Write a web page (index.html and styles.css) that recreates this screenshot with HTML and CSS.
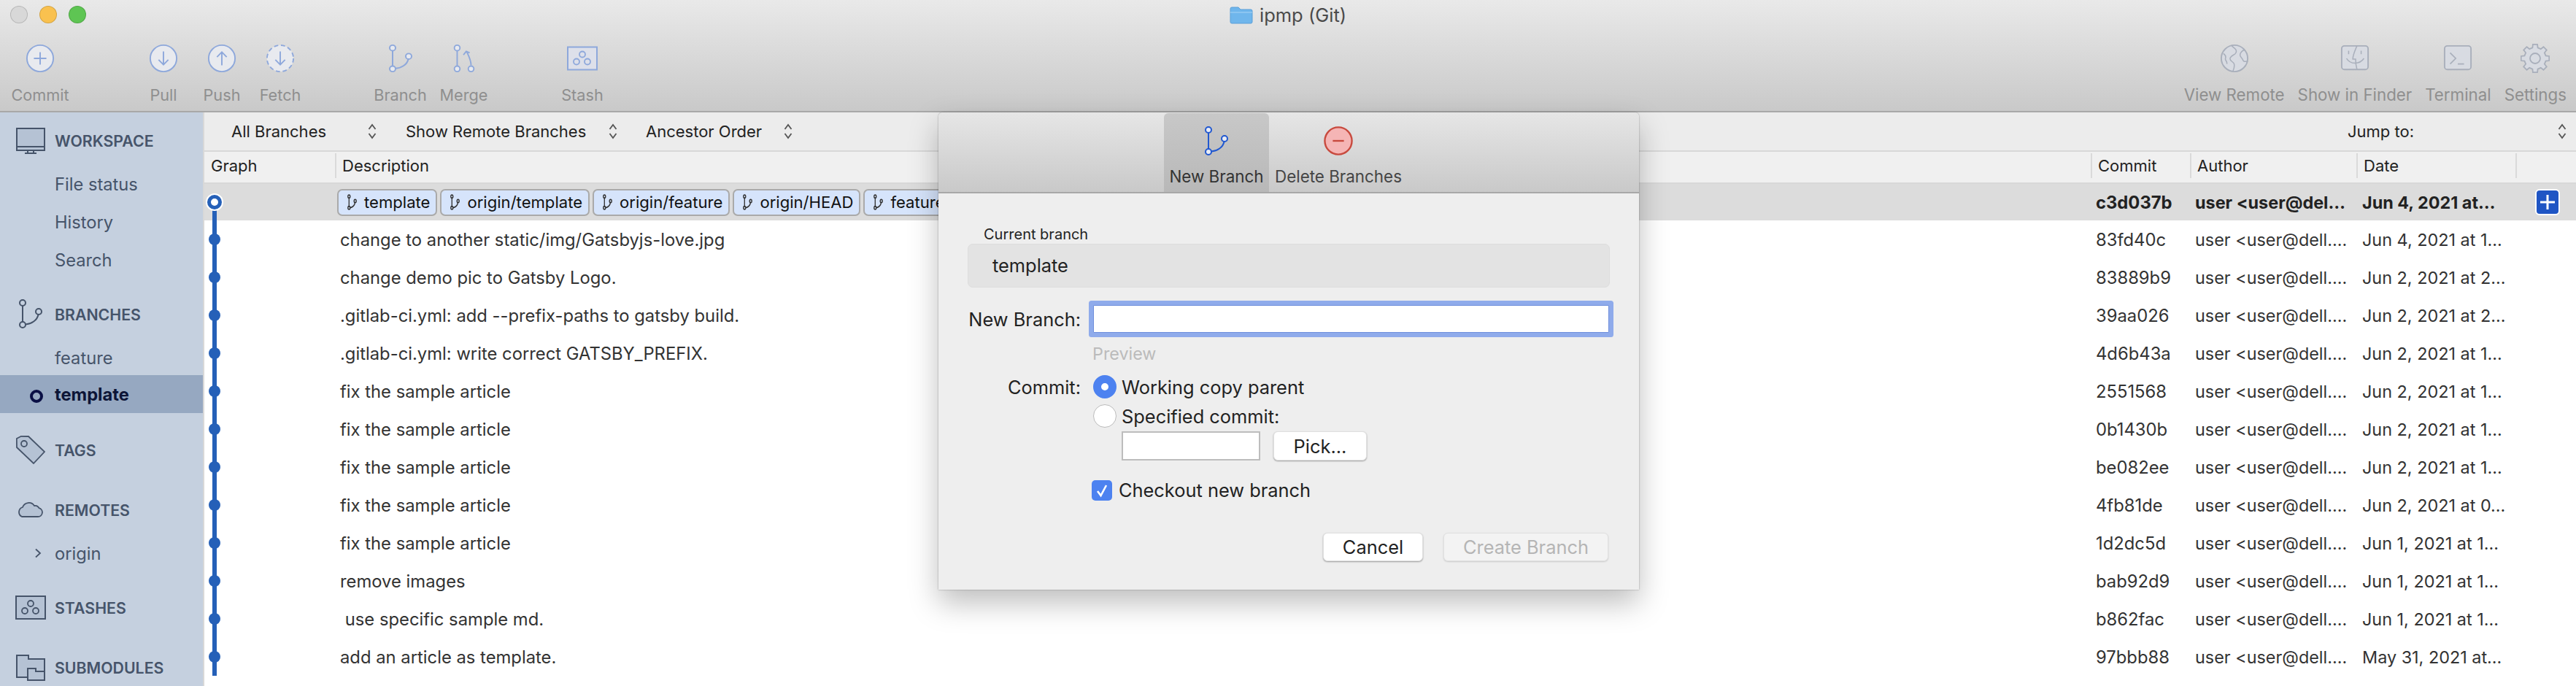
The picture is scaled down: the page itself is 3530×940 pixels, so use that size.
FILE: index.html
```html
<!DOCTYPE html>
<html lang="en">
<head>
    <meta charset="UTF-8">
    <title>ipmp (Git)</title>
    <link rel="stylesheet" href="styles.css">
</head>
<body>
    <!-- Shared icons -->
    <svg class="icon-defs" aria-hidden="true">
        <symbol id="i-branch" viewBox="0 0 34 42" preserveAspectRatio="none">
            <path d="M6 10V32M10 35.5C18 35 26 30 27.5 22" fill="none" stroke="currentColor" stroke-width="var(--line, 2)"/>
            <circle cx="6" cy="6" r="4" fill="var(--node, none)" stroke="currentColor" stroke-width="var(--line, 2)"/>
            <circle cx="28" cy="18" r="4" fill="var(--node, none)" stroke="currentColor" stroke-width="var(--line, 2)"/>
            <circle cx="6" cy="36" r="4" fill="var(--node, none)" stroke="currentColor" stroke-width="var(--line, 2)"/>
        </symbol>
        <symbol id="i-stash" viewBox="0 0 42 33">
            <rect x="1" y="1" width="40" height="31" fill="var(--well, none)" stroke="currentColor" stroke-width="2"/>
            <circle cx="21" cy="11" r="4" fill="none" stroke="currentColor" stroke-width="1.8"/>
            <circle cx="13" cy="21" r="4" fill="none" stroke="currentColor" stroke-width="1.8"/>
            <circle cx="28" cy="21" r="4" fill="none" stroke="currentColor" stroke-width="1.8"/>
        </symbol>
        <symbol id="i-updown" viewBox="0 0 14 22">
            <path d="M2.5 8L7 2l4.500 6M2.500 14L7 20l4.500-6" fill="none" stroke="currentColor" stroke-width="1.800"/>
        </symbol>
    </svg>

    <header class="toolbar">
        <div class="titlebar">
            <div class="lights">
                <span class="light light-close"></span>
                <span class="light light-min"></span>
                <span class="light light-max"></span>
            </div>
            <div class="title">
                <svg class="folder" viewBox="0 0 32 25"><path d="M1 4a2 2 0 0 1 2-2h9l3 3h14a2 2 0 0 1 2 2v15a2 2 0 0 1-2 2H3a2 2 0 0 1-2-2z" fill="#6fb6ec" stroke="#5a9fd8"/><path d="M1 9h30" stroke="#a8d4f5"/></svg>
                <span>ipmp (Git)</span>
            </div>
        </div>
        <div class="tools">
            <div class="tools-left">
                <div class="tool tool-commit">
                    <svg class="tool-icon" viewBox="0 0 42 42"><circle cx="21" cy="21" r="19" fill="#e8eaef" stroke="currentColor" stroke-width="2"/><path d="M21 12V30M12 21H30" stroke="currentColor" stroke-width="2"/></svg>
                    <span>Commit</span>
                </div>
                <div class="tool tool-pull">
                    <svg class="tool-icon" viewBox="0 0 42 42"><circle cx="21" cy="21" r="19" fill="#e8eaef" stroke="currentColor" stroke-width="2"/><path d="M21 11V30M14 23l7 7 7-7" fill="none" stroke="currentColor" stroke-width="2"/></svg>
                    <span>Pull</span>
                </div>
                <div class="tool">
                    <svg class="tool-icon" viewBox="0 0 42 42"><circle cx="21" cy="21" r="19" fill="#e8eaef" stroke="currentColor" stroke-width="2"/><path d="M21 31V12M14 19l7-7 7 7" fill="none" stroke="currentColor" stroke-width="2"/></svg>
                    <span>Push</span>
                </div>
                <div class="tool">
                    <svg class="tool-icon" viewBox="0 0 42 42"><circle cx="21" cy="21" r="19" fill="#e8eaef" stroke="currentColor" stroke-width="2" stroke-dasharray="6 4"/><path d="M21 11V30M14 23l7 7 7-7" fill="none" stroke="currentColor" stroke-width="2"/></svg>
                    <span>Fetch</span>
                </div>
                <div class="tool tool-branch">
                    <svg class="tool-icon tool-branch-icon"><use href="#i-branch"/></svg>
                    <span>Branch</span>
                </div>
                <div class="tool tool-merge">
                    <svg class="tool-icon" viewBox="0 0 42 42"><path d="M11 10V32M31 31C31 24 28 18 25 12M20 16l4-5 5 2" fill="none" stroke="currentColor" stroke-width="2"/><circle cx="11" cy="6" r="4" fill="#e8eaef" stroke="currentColor" stroke-width="2"/><circle cx="11" cy="36" r="4" fill="#e8eaef" stroke="currentColor" stroke-width="2"/><circle cx="31" cy="36" r="4" fill="#e8eaef" stroke="currentColor" stroke-width="2"/></svg>
                    <span>Merge</span>
                </div>
                <div class="tool tool-stash">
                    <svg class="tool-icon tool-stash-icon"><use href="#i-stash"/></svg>
                    <span>Stash</span>
                </div>
            </div>
            <div class="tools-right">
                <div class="tool-plain">
                    <svg class="tool-icon" viewBox="0 0 42 42"><circle cx="21" cy="21" r="19" fill="#d8dbe2" stroke="currentColor" stroke-width="2"/><path d="M17 3c5 4 8 6 6 10-1 3-6 3-8 7s3 5 5 8 0 8-1 11M35 9c-3 1-6 4-6 7s3 4 4 7 3 3 7 2M5 14c3 2 4 4 3 7s3 4 2 8" fill="none" stroke="currentColor" stroke-width="1.600"/></svg>
                    <span>View Remote</span>
                </div>
                <div class="tool-plain">
                    <svg class="tool-icon" viewBox="0 0 42 42"><rect x="2" y="3" width="38" height="34" rx="4" fill="#d8dbe2" stroke="currentColor" stroke-width="2"/><path d="M24 3c-3 7-6 13-6 19h4c0 6 1 11 2 15M9 21c5 9 19 9 25 0M12 10v5M30 10v5" fill="none" stroke="currentColor" stroke-width="1.600"/></svg>
                    <span>Show in Finder</span>
                </div>
                <div class="tool-plain">
                    <svg class="tool-icon" viewBox="0 0 42 42"><rect x="2" y="3" width="38" height="34" rx="4" fill="#d8dbe2" stroke="currentColor" stroke-width="2"/><path d="M10 13l8 8-8 8M21 29h9" fill="none" stroke="currentColor" stroke-width="1.800"/></svg>
                    <span>Terminal</span>
                </div>
                <div class="tool-plain">
                    <svg class="tool-icon" viewBox="0 0 40 40"><polygon points="16.37,5.45 16.95,.74 23.05,.74 23.63,5.45 27.73,7.14 31.46,4.22 35.78,8.54 32.86,12.27 34.55,16.37 39.26,16.95 39.26,23.05 34.55,23.63 32.86,27.73 35.78,31.46 31.46,35.78 27.73,32.86 23.63,34.55 23.05,39.26 16.95,39.26 16.37,34.55 12.27,32.86 8.54,35.78 4.22,31.46 7.14,27.73 5.45,23.63 .74,23.05 .74,16.95 5.45,16.37 7.14,12.27 4.22,8.54 8.54,4.22 12.27,7.14" fill="#d8dbe2" stroke="currentColor" stroke-width="1.800"/><circle cx="20" cy="20" r="7" fill="none" stroke="currentColor" stroke-width="1.800"/></svg>
                    <span>Settings</span>
                </div>
            </div>
        </div>
    </header>

    <div class="window-body">
        <nav class="sidebar">
            <section class="side-section side-first">
                <div class="side-head">
                    <svg class="side-icon" viewBox="0 0 40 36"><rect x="1" y="1" width="38" height="30" fill="#b5c2d4" stroke="currentColor" stroke-width="2"/><path d="M1 26H39M16 31V34M24 31V34M12 35H28" fill="none" stroke="currentColor" stroke-width="2"/></svg>
                    <span>WORKSPACE</span>
                </div>
                <div class="side-list">
                    <div class="side-item">File status</div>
                    <div class="side-item">History</div>
                    <div class="side-item">Search</div>
                </div>
            </section>
            <section class="side-section">
                <div class="side-head">
                    <svg class="side-icon side-branch"><use href="#i-branch"/></svg>
                    <span>BRANCHES</span>
                </div>
                <div class="side-list side-list-tight">
                    <div class="side-item side-item-low">feature</div>
                    <div class="side-item side-item-current"><span class="current-ring"></span>template</div>
                </div>
            </section>
            <section class="side-section side-tags">
                <div class="side-head">
                    <svg class="side-icon" viewBox="0 0 40 40"><path d="M.8 4L7 .8 17 1 39 22 24 38 1 16z" fill="#b5c2d4" stroke="currentColor" stroke-width="1.800"/><circle cx="11" cy="11" r="4" fill="none" stroke="currentColor" stroke-width="1.800"/></svg>
                    <span>TAGS</span>
                </div>
            </section>
            <section class="side-section side-wide">
                <div class="side-head">
                    <svg class="side-icon side-cloud" viewBox="0 0 36 24"><path d="M7 23h22a6 6 0 0 0 1.500-11.800A6 6 0 0 0 24 8 9 9 0 0 0 8 10a7 7 0 0 0-1 13z" fill="#b5c2d4" stroke="currentColor" stroke-width="1.800"/></svg>
                    <span>REMOTES</span>
                </div>
                <div class="side-list">
                    <div class="side-item"><svg class="side-chevron" viewBox="0 0 10 14"><path d="M2 1.500L8 7l-6 5.500" fill="none" stroke="currentColor" stroke-width="1.800"/></svg>origin</div>
                </div>
            </section>
            <section class="side-section">
                <div class="side-head">
                    <svg class="side-icon side-stash"><use href="#i-stash"/></svg>
                    <span>STASHES</span>
                </div>
            </section>
            <section class="side-section side-wide">
                <div class="side-head">
                    <svg class="side-icon" viewBox="0 0 40 36"><path d="M16 31H1V1H17V6H39V23" fill="#b5c2d4" stroke="currentColor" stroke-width="2"/><path d="M16 19H27V23H39V35H16Z" fill="#b5c2d4" stroke="currentColor" stroke-width="2"/></svg>
                    <span>SUBMODULES</span>
                </div>
            </section>
        </nav>

        <main class="main">
            <div class="filters">
                <div class="filter filter-all">All Branches<svg class="updown"><use href="#i-updown"/></svg></div>
                <div class="filter filter-remote">Show Remote Branches<svg class="updown"><use href="#i-updown"/></svg></div>
                <div class="filter filter-order">Ancestor Order<svg class="updown"><use href="#i-updown"/></svg></div>
                <div class="filter filter-jump">Jump to:<svg class="updown"><use href="#i-updown"/></svg></div>
            </div>

            <div class="log-head">
                <div class="head-cell head-graph">Graph</div>
                <div class="head-cell">Description</div>
                <div class="head-cell">Commit</div>
                <div class="head-cell">Author</div>
                <div class="head-cell">Date</div>
                <div class="head-cell"></div>
            </div>

            <div class="log">
                <div class="row row-selected">
                    <div class="graph graph-first"><span class="dot dot-head"></span></div>
                    <div class="desc">
                        <span class="tag"><svg class="tag-icon"><use href="#i-branch"/></svg>template</span>
                        <span class="tag"><svg class="tag-icon"><use href="#i-branch"/></svg>origin/template</span>
                        <span class="tag"><svg class="tag-icon"><use href="#i-branch"/></svg>origin/feature</span>
                        <span class="tag"><svg class="tag-icon"><use href="#i-branch"/></svg>origin/HEAD</span>
                        <span class="tag"><svg class="tag-icon"><use href="#i-branch"/></svg>feature</span>
                    </div>
                    <div class="hash">c3d037b</div>
                    <div class="author">user &lt;user@del…</div>
                    <div class="date">Jun 4, 2021 at…</div>
                    <div class="extra"><span class="plus-btn"><svg viewBox="0 0 20 20"><path d="M10 0V20M0 10H20" stroke="#fff" stroke-width="3"/></svg></span></div>
                </div>
                <div class="row"><div class="graph"><span class="dot"></span></div><div class="desc">change to another static/img/Gatsbyjs-love.jpg</div><div class="hash">83fd40c</div><div class="author">user &lt;user@dell.…</div><div class="date">Jun 4, 2021 at 1…</div><div class="extra"></div></div>
                <div class="row"><div class="graph"><span class="dot"></span></div><div class="desc">change demo pic to Gatsby Logo.</div><div class="hash">83889b9</div><div class="author">user &lt;user@dell.…</div><div class="date">Jun 2, 2021 at 2…</div><div class="extra"></div></div>
                <div class="row"><div class="graph"><span class="dot"></span></div><div class="desc">.gitlab-ci.yml: add --prefix-paths to gatsby build.</div><div class="hash">39aa026</div><div class="author">user &lt;user@dell.…</div><div class="date">Jun 2, 2021 at 2…</div><div class="extra"></div></div>
                <div class="row"><div class="graph"><span class="dot"></span></div><div class="desc">.gitlab-ci.yml: write correct GATSBY_PREFIX.</div><div class="hash">4d6b43a</div><div class="author">user &lt;user@dell.…</div><div class="date">Jun 2, 2021 at 1…</div><div class="extra"></div></div>
                <div class="row"><div class="graph"><span class="dot"></span></div><div class="desc">fix the sample article</div><div class="hash">2551568</div><div class="author">user &lt;user@dell.…</div><div class="date">Jun 2, 2021 at 1…</div><div class="extra"></div></div>
                <div class="row"><div class="graph"><span class="dot"></span></div><div class="desc">fix the sample article</div><div class="hash">0b1430b</div><div class="author">user &lt;user@dell.…</div><div class="date">Jun 2, 2021 at 1…</div><div class="extra"></div></div>
                <div class="row"><div class="graph"><span class="dot"></span></div><div class="desc">fix the sample article</div><div class="hash">be082ee</div><div class="author">user &lt;user@dell.…</div><div class="date">Jun 2, 2021 at 1…</div><div class="extra"></div></div>
                <div class="row"><div class="graph"><span class="dot"></span></div><div class="desc">fix the sample article</div><div class="hash">4fb81de</div><div class="author">user &lt;user@dell.…</div><div class="date">Jun 2, 2021 at 0…</div><div class="extra"></div></div>
                <div class="row"><div class="graph"><span class="dot"></span></div><div class="desc">fix the sample article</div><div class="hash">1d2dc5d</div><div class="author">user &lt;user@dell.…</div><div class="date">Jun 1, 2021 at 1…</div><div class="extra"></div></div>
                <div class="row"><div class="graph"><span class="dot"></span></div><div class="desc">remove images</div><div class="hash">bab92d9</div><div class="author">user &lt;user@dell.…</div><div class="date">Jun 1, 2021 at 1…</div><div class="extra"></div></div>
                <div class="row"><div class="graph"><span class="dot"></span></div><div class="desc"> use specific sample md.</div><div class="hash">b862fac</div><div class="author">user &lt;user@dell.…</div><div class="date">Jun 1, 2021 at 1…</div><div class="extra"></div></div>
                <div class="row"><div class="graph"><span class="dot"></span></div><div class="desc">add an article as template.</div><div class="hash">97bbb88</div><div class="author">user &lt;user@dell.…</div><div class="date">May 31, 2021 at…</div><div class="extra"></div></div>
            </div>
        </main>
    </div>

    <!-- Branch sheet -->
    <div class="sheet">
        <div class="sheet-head">
            <div class="sheet-tab sheet-tab-active">
                <div class="tab-icon"><svg class="tab-branch"><use href="#i-branch"/></svg></div>
                <span>New Branch</span>
            </div>
            <div class="sheet-tab sheet-tab-delete">
                <div class="tab-icon">
                    <svg class="tab-delete" viewBox="0 0 42 42"><circle cx="21" cy="21" r="19.500" fill="#f5b5b5" stroke="#c84a3e" stroke-width="2.500"/><path d="M13 21H29" stroke="#c84a3e" stroke-width="2.500"/></svg>
                </div>
                <span>Delete Branches</span>
            </div>
        </div>
        <div class="sheet-body">
            <div class="current-label">Current branch</div>
            <div class="current-box">template</div>

            <div class="form-row form-row-name">
                <label class="form-label">New Branch:</label>
                <div class="name-input"></div>
            </div>
            <div class="preview">Preview</div>

            <div class="form-row form-row-commit">
                <label class="form-label">Commit:</label>
                <span class="radio radio-on"></span>
                <span class="option-text">Working copy parent</span>
            </div>
            <div class="form-row form-row-specified">
                <span class="radio"></span>
                <span class="option-text">Specified commit:</span>
            </div>
            <div class="form-row form-row-pick">
                <div class="sha-input"></div>
                <button class="btn btn-pick">Pick...</button>
            </div>
            <div class="form-row form-row-check">
                <span class="checkbox"><svg viewBox="0 0 28 28"><path d="M8 15l4.500 6L20 7" fill="none" stroke="#fff" stroke-width="2.600"/></svg></span>
                <span class="option-text">Checkout new branch</span>
            </div>
            <div class="sheet-actions">
                <button class="btn btn-cancel">Cancel</button>
                <button class="btn btn-create">Create Branch</button>
            </div>
        </div>
    </div>
</body>
</html>
```

FILE: styles.css
```css
/* General reset */
* {
    margin: 0;
    padding: 0;
    box-sizing: border-box;
}

html, body {
    width: 3530px;
    height: 940px;
    overflow: hidden;
}

body {
    font-family: 'Inter', 'Noto Sans', sans-serif;
    font-size: 22px;
    color: #333;
    background-color: #fff;
    display: flex;
    flex-direction: column;
    position: relative;
}

.icon-defs {
    position: absolute;
    width: 0;
    height: 0;
}

/* Toolbar */
.toolbar {
    height: 154px;
    flex-shrink: 0;
    background: linear-gradient(to bottom, #e9e9e9, #c9c9c9);
    border-bottom: 2px solid #a8a8a8;
}

.titlebar {
    height: 40px;
    display: grid;
    grid-template-columns: 1fr auto 1fr;
    align-items: center;
}

.lights {
    display: flex;
    gap: 16px;
    padding-left: 14px;
}

.light {
    width: 24px;
    height: 24px;
    border-radius: 50%;
    border: 1px solid rgba(0, 0, 0, 0.15);
}

.light-close { background-color: #d8d8d8; }
.light-min { background-color: #f9c14f; }
.light-max { background-color: #5ec553; }

.title {
    display: flex;
    align-items: center;
    gap: 9px;
    font-size: 25.5px;
    color: #4a4a4a;
}

.folder {
    width: 32px;
    height: 25px;
}

.tools {
    display: flex;
    justify-content: space-between;
    padding: 20px 13px 0 15px;
}

.tools-left {
    display: flex;
}

.tools-right {
    display: flex;
    gap: 18px;
}

.tool, .tool-plain {
    display: flex;
    flex-direction: column;
    align-items: center;
    gap: 17px;
    font-size: 21.7px;
    line-height: 26px;
    color: #8f8f8f;
    white-space: nowrap;
}

.tool {
    width: 80px;
    color: #8f8f8f;
}

.tool-plain {
    font-size: 22.3px;
}

.tool .tool-icon {
    color: #8ea8db;
    --node: #e8eaef;
    --well: #dde0ea;
}

.tool-plain .tool-icon {
    color: #a9afbb;
}

.tool-icon {
    width: 40px;
    height: 40px;
}

.tool-pull { margin-left: 89px; }
.tool-branch { width: 87px; margin-left: 81px; }
.tool-merge { width: 87px; }
.tool-stash { margin-left: 79px; }

.tool-branch-icon { width: 34px; }
.tool-stash-icon { width: 42px; }

/* Window content */
.window-body {
    flex: 1;
    display: flex;
    min-height: 0;
}

.sidebar {
    width: 280px;
    flex-shrink: 0;
    background-color: #c5d0df;
    border-right: 2px solid #d8d8d8;
    color: #46546a;
    overflow: hidden;
}

.side-section {
    margin-top: 29px;
}

.side-first { margin-top: 19px; }
.side-tags { margin-top: 31px; }
.side-wide { margin-top: 42px; }

.side-head {
    height: 40px;
    display: flex;
    align-items: center;
    position: relative;
    padding-left: 75px;
    font-size: 21.3px;
    font-weight: 600;
}

.side-icon {
    position: absolute;
    left: 22px;
    top: 0;
    width: 40px;
    height: 40px;
    color: #46546a;
}

.side-branch {
    width: 34px;
    height: 42px;
    left: 25px;
    top: -2px;
    --node: #c5d0df;
}

.side-cloud { top: 6px; height: 24px; left: 23px; width: 36px; }
.side-stash { width: 42px; height: 33px; left: 21px; top: 3px; --well: #b5c2d4; }

.side-list {
    margin-top: 13px;
}

.side-list-tight {
    margin-top: 11px;
}

.side-item {
    height: 52px;
    display: flex;
    align-items: center;
    position: relative;
    padding-left: 75px;
    font-size: 23.7px;
}

.side-item-low {
    padding-top: 4px;
}

.side-item-current {
    background-color: #96a8c1;
    color: #0d1537;
    font-weight: 700;
}

.current-ring {
    position: absolute;
    left: 41px;
    top: 20px;
    width: 18px;
    height: 18px;
    border: 4px solid #0a0f45;
    border-radius: 50%;
}

.side-chevron {
    position: absolute;
    left: 47px;
    top: 19px;
    width: 10px;
    height: 14px;
}

.main {
    flex: 1;
    min-width: 0;
    display: flex;
    flex-direction: column;
}

/* Filter bar */
.filters {
    height: 52px;
    flex-shrink: 0;
    display: flex;
    align-items: center;
    background-color: #ececec;
    color: #222;
}

.filter {
    display: flex;
    align-items: center;
    justify-content: space-between;
    white-space: nowrap;
}

.updown {
    width: 14px;
    height: 22px;
    color: #555;
}

.filter-all { width: 200px; margin-left: 37px; }
.filter-remote { width: 291px; margin-left: 39px; }
.filter-order { width: 202px; margin-left: 38px; }
.filter-jump { width: 301px; margin-left: auto; margin-right: 12px; }

/* Log table */
.log-head, .row {
    display: grid;
    grid-template-columns: 179px 2406px 136px 228px 218px 83px;
}

.log-head {
    height: 46px;
    flex-shrink: 0;
    padding-top: 2px;
    background-color: #f0f0f0;
    border-top: 2px solid #d8d8d8;
    border-bottom: 2px solid #d8d8d8;
    color: #222;
}

.head-cell {
    height: 34px;
    line-height: 34px;
    padding-left: 8px;
    border-left: 2px solid #dadada;
}

.head-graph {
    border-left: none;
    padding-left: 9px;
}

.log {
    flex: 1;
    overflow: hidden;
}

.row {
    height: 52px;
    align-items: center;
    background-color: #fff;
    font-size: 23.8px;
    white-space: nowrap;
}

.row-selected {
    height: 50px;
    background-color: #dcdcdc;
    color: #222;
    font-weight: 700;
}

.graph {
    height: 100%;
    display: flex;
    align-items: center;
    position: relative;
    padding-left: 6px;
}

/* the branch line runs through every row */
.graph::before {
    content: "";
    position: absolute;
    left: 11px;
    top: 0;
    bottom: 0;
    width: 6px;
    background-color: #2560b8;
}

.graph-first::before {
    top: 50%;
}

.dot {
    width: 16px;
    height: 16px;
    border-radius: 50%;
    background-color: #2560b8;
    position: relative;
}

.dot-head {
    width: 20px;
    height: 20px;
    margin-left: -2px;
    background-color: #fff;
    border: 5px solid #2560b8;
    box-shadow: 0 0 0 2px #fff;
}

.desc, .hash, .author, .date {
    padding-left: 7px;
    overflow: hidden;
    white-space: pre;
}

.author, .date {
    font-size: 23.4px;
}

.date {
    padding-left: 8px;
}

.row-selected .desc {
    display: flex;
    gap: 4px;
    padding-left: 3px;
    font-size: 22.1px;
    font-weight: 400;
    overflow: visible;
}

.tag {
    height: 37px;
    display: flex;
    align-items: center;
    gap: 10px;
    padding: 0 8px 0 12px;
    background-color: #d6e4fb;
    border: 2px solid #aaaaaa;
    border-radius: 7px;
    color: #111;
}

.tag-icon {
    width: 13px;
    height: 22px;
    color: #333;
    --line: 3.5;
}

.extra {
    display: flex;
}

.plus-btn {
    margin-left: 27px;
    width: 34px;
    height: 36px;
    padding: 6px 5px;
    background-color: #1f55c4;
    border: 2px solid #fff;
    border-radius: 6px;
    display: flex;
}

/* Sheet */
.sheet {
    position: absolute;
    left: 1286px;
    top: 154px;
    width: 960px;
    height: 654px;
    background-color: #eeeeee;
    border-radius: 6px 6px 0 0;
    box-shadow: 0 18px 40px rgba(0, 0, 0, 0.26), 0 0 2px rgba(0, 0, 0, 0.4);
    display: flex;
    flex-direction: column;
}

.sheet-head {
    height: 111px;
    flex-shrink: 0;
    display: flex;
    padding-left: 309px;
    background: linear-gradient(to bottom, #e6e6e6, #c9c9c9);
    border-bottom: 2px solid #a8a8a8;
    border-radius: 6px 6px 0 0;
}

.sheet-tab {
    width: 144px;
    display: flex;
    flex-direction: column;
    align-items: center;
    font-size: 22.4px;
    line-height: 22px;
    color: #454545;
    white-space: nowrap;
}

.sheet-tab-active {
    background: linear-gradient(to bottom, #c8c8c8, #b8b8b8);
    border-radius: 6px 6px 0 0;
    color: #333;
    margin-top: 1px;
}

.sheet-tab-delete {
    width: 186px;
    margin-left: 2px;
}

.tab-icon {
    height: 76px;
    display: flex;
    align-items: center;
    flex-shrink: 0;
}

.sheet-tab-delete .tab-icon {
    height: 77px;
}

.tab-branch {
    width: 34px;
    height: 42px;
    color: #2158d0;
    --node: #e8ecf5;
}

.tab-delete {
    width: 40px;
    height: 40px;
}

.sheet-body {
    flex: 1;
    padding: 44px 40px 0;
    font-size: 25.4px;
    color: #222;
}

.current-label {
    margin-left: 22px;
    font-size: 20px;
    line-height: 24px;
}

.current-box {
    margin-top: 1px;
    height: 60px;
    line-height: 58px;
    padding-left: 33px;
    background-color: #e3e3e3;
    border: 1px solid #dddddd;
    border-radius: 7px;
}

.form-row {
    display: flex;
    align-items: center;
}

.form-label {
    width: 155px;
    flex-shrink: 0;
    text-align: right;
}

.form-row-name {
    margin-top: 24px;
}

.name-input {
    width: 707px;
    height: 38px;
    margin-left: 17px;
    background-color: #fff;
    border: 1px solid #6f8fdc;
    box-shadow: 0 0 0 6px #8fabeb;
    border-radius: 1px;
}

.preview {
    margin: 17px 0 0 171px;
    font-size: 23.3px;
    line-height: 24px;
    color: #bbbbbb;
}

.form-row-commit {
    margin-top: 17px;
}

.form-row-commit .radio {
    margin-left: 17px;
}

.radio {
    width: 32px;
    height: 32px;
    flex-shrink: 0;
    border-radius: 50%;
    background-color: #fff;
    border: 1px solid #bbbbbb;
}

.radio-on {
    background-color: #fff;
    border: 11px solid #4d82f0;
}

.option-text {
    margin-left: 7px;
    white-space: nowrap;
}

.form-row-specified {
    margin-top: 8px;
    padding-left: 172px;
}

.form-row-pick {
    margin-top: 5px;
    padding-left: 211px;
    gap: 18px;
}

.sha-input {
    width: 190px;
    height: 40px;
    background-color: #fff;
    border: 2px solid #bdbdbd;
}

.btn {
    font-family: inherit;
    font-size: 25.4px;
    height: 39px;
    color: #222;
    background-color: #fff;
    border: 1px solid #e0e0e0;
    border-radius: 6px;
    box-shadow: 0 1px 2px rgba(0, 0, 0, 0.35);
}

.btn-pick {
    width: 128px;
    height: 40px;
}

.form-row-check {
    margin-top: 25px;
    padding-left: 170px;
}

.checkbox {
    width: 28px;
    height: 28px;
    flex-shrink: 0;
    background-color: #4d82f0;
    border-radius: 5px;
    display: flex;
}

.form-row-check .option-text {
    margin-left: 9px;
}

.sheet-actions {
    margin-top: 43px;
    padding-right: 2px;
    display: flex;
    justify-content: flex-end;
    gap: 28px;
}

.btn-cancel {
    width: 137px;
}

.btn-create {
    width: 226px;
    color: #b5b5b5;
    background-color: #f3f3f3;
    box-shadow: 0 1px 2px rgba(0, 0, 0, 0.15);
}
```
